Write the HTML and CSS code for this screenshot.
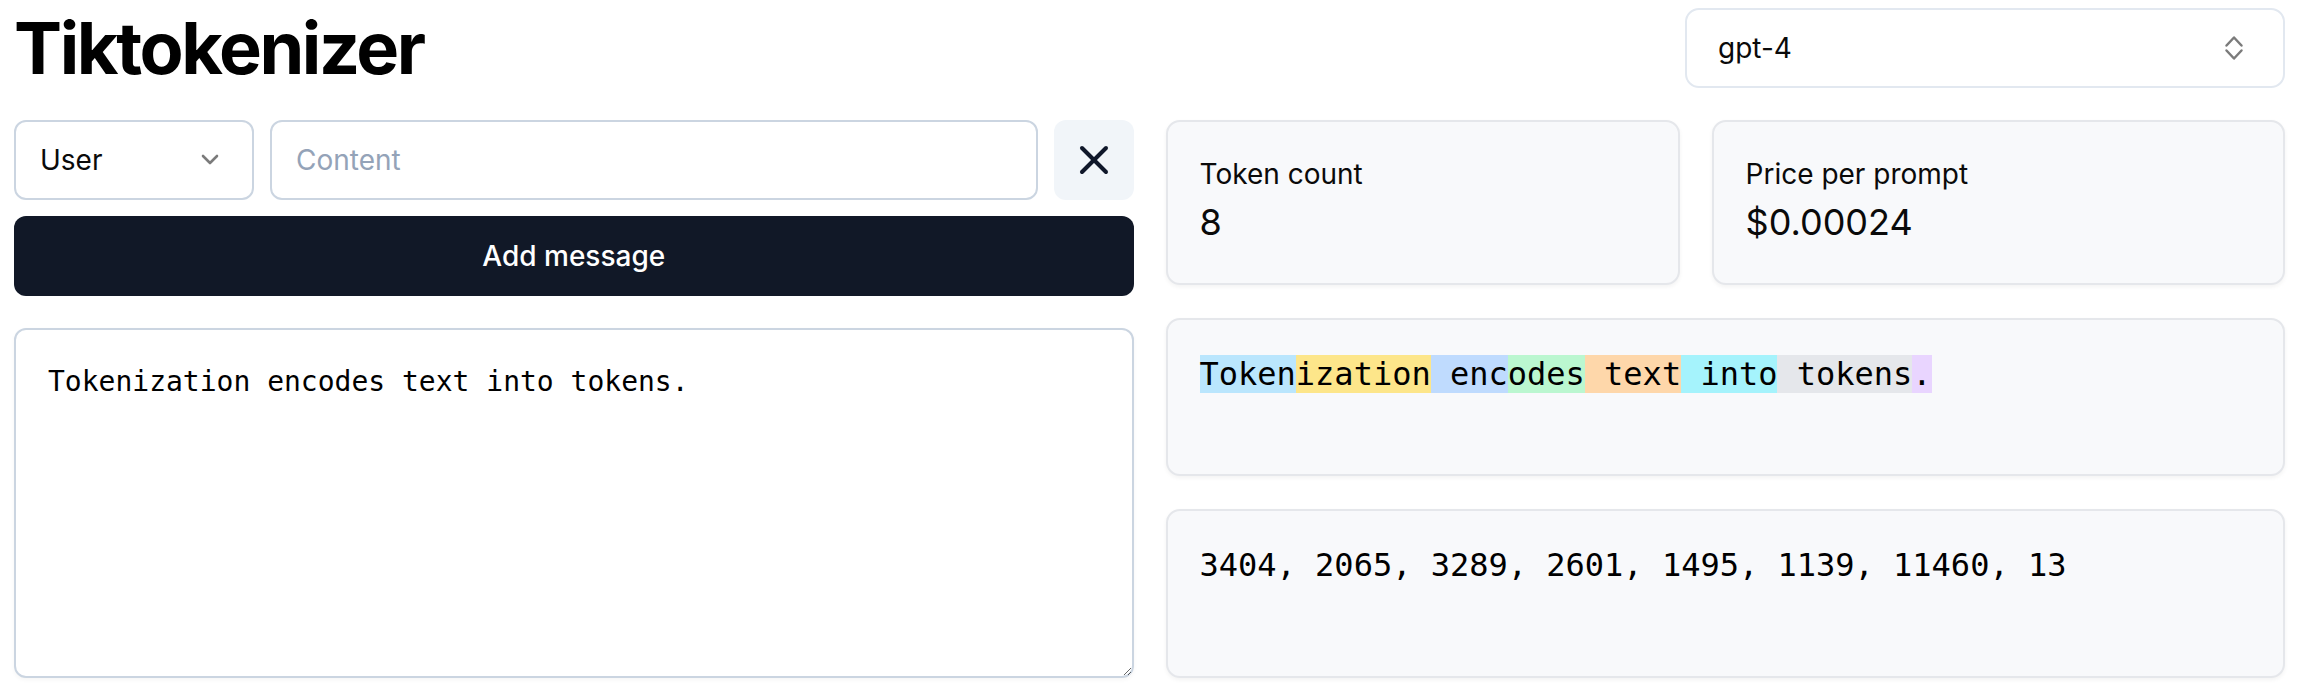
FILE: index.html
```html
<!DOCTYPE html>
<html lang="en">
<head>
<meta charset="utf-8">
<title>Tiktokenizer</title>
<link rel="stylesheet" href="styles.css">
</head>
<body>
<main class="page">
  <header class="header">
    <h1 class="title">Tiktokenizer</h1>
    <div class="model-select">
      <span>gpt-4</span>
      <svg class="updown" width="22" height="28" viewBox="0 0 22 28" fill="none" stroke="#7b7b7b" stroke-width="2.5" stroke-linecap="round" stroke-linejoin="round"><path d="M3.5 11.5 L11 3.5 L18.5 11.5"/><path d="M3.5 16.5 L11 24.5 L18.5 16.5"/></svg>
    </div>
  </header>
  <section class="grid">
    <div class="left">
      <div class="msg-row">
        <div class="role-select">
          <span>User</span>
          <svg width="32" height="32" viewBox="0 0 32 32" fill="none" stroke="#7b7b7b" stroke-width="2.6" stroke-linecap="round" stroke-linejoin="round"><path d="M9 12 L16 19 L23 12"/></svg>
        </div>
        <input class="content-input" type="text" placeholder="Content">
        <button class="clear-btn" type="button" aria-label="Clear">
          <svg width="48" height="48" viewBox="0 0 24 24" fill="none" stroke="#0f172a" stroke-width="2" stroke-linecap="round" stroke-linejoin="round"><path d="M18 6 6 18"/><path d="m6 6 12 12"/></svg>
        </button>
      </div>
      <button class="add-btn" type="button">Add message</button>
      <textarea class="editor" spellcheck="false">Tokenization encodes text into tokens.</textarea>
    </div>
    <div class="right">
      <div class="stats">
        <div class="card stat">
          <div class="stat-label">Token count</div>
          <div class="stat-value">8</div>
        </div>
        <div class="card stat">
          <div class="stat-label">Price per prompt</div>
          <div class="stat-value">$0.00024</div>
        </div>
      </div>
      <div class="card mono tokens"><span class="t1">Token</span><span class="t2">ization</span><span class="t3"> enc</span><span class="t4">odes</span><span class="t5"> text</span><span class="t6"> into</span><span class="t7"> tokens</span><span class="t8">.</span></div>
      <div class="card mono ids">3404, 2065, 3289, 2601, 1495, 1139, 11460, 13</div>
    </div>
  </section>
</main>
</body>
</html>
```
FILE: styles.css
```css
* { box-sizing: border-box; }
html, body { margin: 0; padding: 0; background: #ffffff; }
body {
  font-family: Inter, "Noto Sans", "Liberation Sans", sans-serif;
  color: #0a0a0a;
}
.page {
  padding: 8px 25px 18px 14px;
  display: flex;
  flex-direction: column;
  gap: 32px;
}
.header {
  display: flex;
  align-items: center;
  justify-content: space-between;
  height: 80px;
}
.title {
  margin: 0;
  font-size: 72px;
  line-height: 80px;
  font-weight: 700;
  letter-spacing: -2.4px;
  color: #000;
}
.model-select {
  width: 600px;
  height: 80px;
  border: 2px solid #e2e8f0;
  border-radius: 14px;
  display: flex;
  align-items: center;
  justify-content: space-between;
  padding: 0 38px 0 31px;
  font-size: 28px;
  color: #0a0a0a;
  background: #fff;
}
.updown { display: block; }
.grid {
  display: grid;
  grid-template-columns: 1fr 1fr;
  gap: 32px;
}
.left {
  display: flex;
  flex-direction: column;
}
.msg-row {
  display: flex;
  gap: 16px;
  height: 80px;
}
.role-select {
  width: 240px;
  flex: none;
  border: 2px solid #cbd5e1;
  border-radius: 12px;
  display: flex;
  align-items: center;
  justify-content: space-between;
  padding: 0 26px 0 24px;
  font-size: 28px;
  color: #0a0a0a;
}
.role-select svg { display: block; }
.content-input {
  flex: 1;
  min-width: 0;
  border: 2px solid #cbd5e1;
  border-radius: 12px;
  padding: 0 24px;
  font-family: inherit;
  font-size: 28px;
  color: #0a0a0a;
  outline: none;
}
.content-input::placeholder { color: #94a3b8; }
.clear-btn {
  width: 80px;
  flex: none;
  border: 0;
  border-radius: 12px;
  background: #f1f5f9;
  display: flex;
  align-items: center;
  justify-content: center;
  padding: 0;
}
.add-btn {
  margin-top: 16px;
  height: 80px;
  border: 0;
  border-radius: 12px;
  background: #111827;
  color: #fff;
  font-family: inherit;
  font-size: 28px;
  font-weight: 500;
}
.editor {
  margin-top: 32px;
  height: 350px;
  border: 2px solid #cbd5e1;
  border-radius: 12px;
  padding: 32px;
  font-family: "DejaVu Sans Mono", "Liberation Mono", monospace;
  font-size: 28px;
  line-height: 40px;
  color: #000;
  resize: vertical;
  outline: none;
  box-shadow: 0 2px 4px rgba(0,0,0,0.04);
}
.right {
  display: flex;
  flex-direction: column;
  gap: 33px;
}
.stats {
  display: flex;
  gap: 32px;
}
.stat { flex: 1 1 auto; }
.card {
  background: #f8f9fb;
  border: 2px solid #e5e7eb;
  border-radius: 14px;
  box-shadow: 0 2px 4px rgba(0,0,0,0.05);
  padding: 32px;
}
.stat-label {
  font-size: 28px;
  line-height: 40px;
  color: #0a0a0a;
}
.stat-value {
  font-size: 36px;
  line-height: 57px;
  color: #0a0a0a;
}
.mono {
  font-family: "DejaVu Sans Mono", "Liberation Mono", monospace;
  font-size: 32px;
  line-height: 45px;
  color: #000;
  white-space: pre-wrap;
}
.tokens { min-height: 158px; }
.ids { flex: 1; }
.t1 { background: #bae6fd; }
.t2 { background: #fde68a; }
.t3 { background: #bfdbfe; }
.t4 { background: #bbf7d0; }
.t5 { background: #fed7aa; }
.t6 { background: #a5f3fc; }
.t7 { background: #e5e7eb; }
.t8 { background: #e9d5ff; }
```
